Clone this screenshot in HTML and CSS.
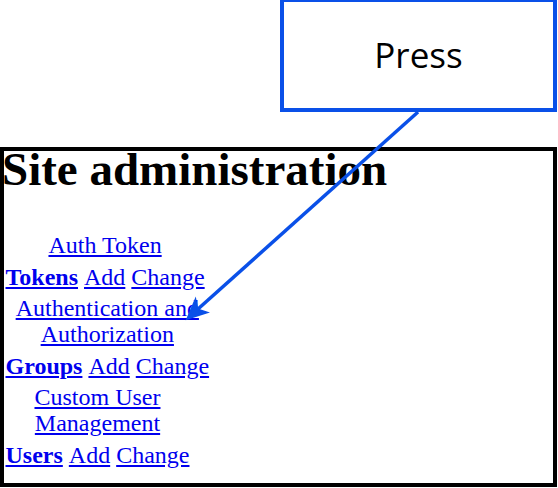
FILE: index.html
```html
<!DOCTYPE html>
<html lang="en">
<head>
<meta charset="utf-8">
<title>Site administration</title>
<link rel="stylesheet" href="styles.css">
</head>
<body>
<div class="page">
  <h1 class="title">Site administration</h1>
  <div class="module">
    <table class="app">
      <caption><a href="#" class="link">Auth Token</a></caption>
      <tr><th class="model"><a href="#" class="link">Tokens</a></th><td class="cell"><a href="#" class="link">Add</a></td><td class="cell"><a href="#" class="link">Change</a></td></tr>
    </table>
  </div>
  <div class="module">
    <table class="app">
      <caption><a href="#" class="link">Authentication and Authorization</a></caption>
      <tr><th class="model"><a href="#" class="link">Groups</a></th><td class="cell"><a href="#" class="link">Add</a></td><td class="cell"><a href="#" class="link">Change</a></td></tr>
    </table>
  </div>
  <div class="module">
    <table class="app">
      <caption><a href="#" class="link">Custom User Management</a></caption>
      <tr><th class="model"><a href="#" class="link">Users</a></th><td class="cell"><a href="#" class="link">Add</a></td><td class="cell"><a href="#" class="link">Change</a></td></tr>
    </table>
  </div>
</div>
<div class="frame"></div>
<div class="callout"><span class="callout-text">Press</span></div>
<svg class="arrow" width="558" height="488" viewBox="0 0 558 488" xmlns="http://www.w3.org/2000/svg">
  <line x1="418" y1="112" x2="198" y2="309" stroke="#0a50e8" stroke-width="3.5"/>
  <polygon points="187,319 207.5,312.5 197.7,309.3 195.5,299" fill="#0a50e8" stroke="#0a50e8" stroke-width="1.5" stroke-linejoin="miter"/>
</svg>
</body>
</html>
```
FILE: styles.css
```css
html, body {
  margin: 0;
  padding: 0;
  background: #ffffff;
}
body {
  position: relative;
  width: 558px;
  height: 488px;
  overflow: hidden;
  font-family: "Liberation Serif", "Times New Roman", serif;
  font-size: 24px;
  line-height: 26px;
  color: #000;
}
.page {
  padding: 142px 0 0 2px;
}
.title {
  margin: 0 0 36px 0;
  font-size: 47px;
  line-height: 54px;
  font-weight: bold;
}
.module {
  margin: 0;
}
.app {
  border-collapse: separate;
  border-spacing: 3px;
  margin: 0 0 0 -1px;
}
.app caption {
  text-align: center;
}
.model, .cell {
  padding: 2.5px 1.5px;
}
.model {
  font-weight: bold;
  text-align: left;
}
.link {
  color: #0000ee;
  text-decoration: underline;
}
.frame {
  position: absolute;
  left: 0;
  top: 147px;
  width: 557px;
  height: 340px;
  box-sizing: border-box;
  border: 4px solid #000;
}
.callout {
  position: absolute;
  left: 280px;
  top: -2px;
  width: 277px;
  height: 114px;
  box-sizing: border-box;
  border: 4px solid #0a50e8;
  background: #fff;
  display: flex;
  align-items: center;
  justify-content: center;
}
.callout-text {
  font-family: "Open Sans", "Noto Sans", sans-serif;
  font-size: 35px;
  color: #000;
}
.arrow {
  position: absolute;
  left: 0;
  top: 0;
}
```
